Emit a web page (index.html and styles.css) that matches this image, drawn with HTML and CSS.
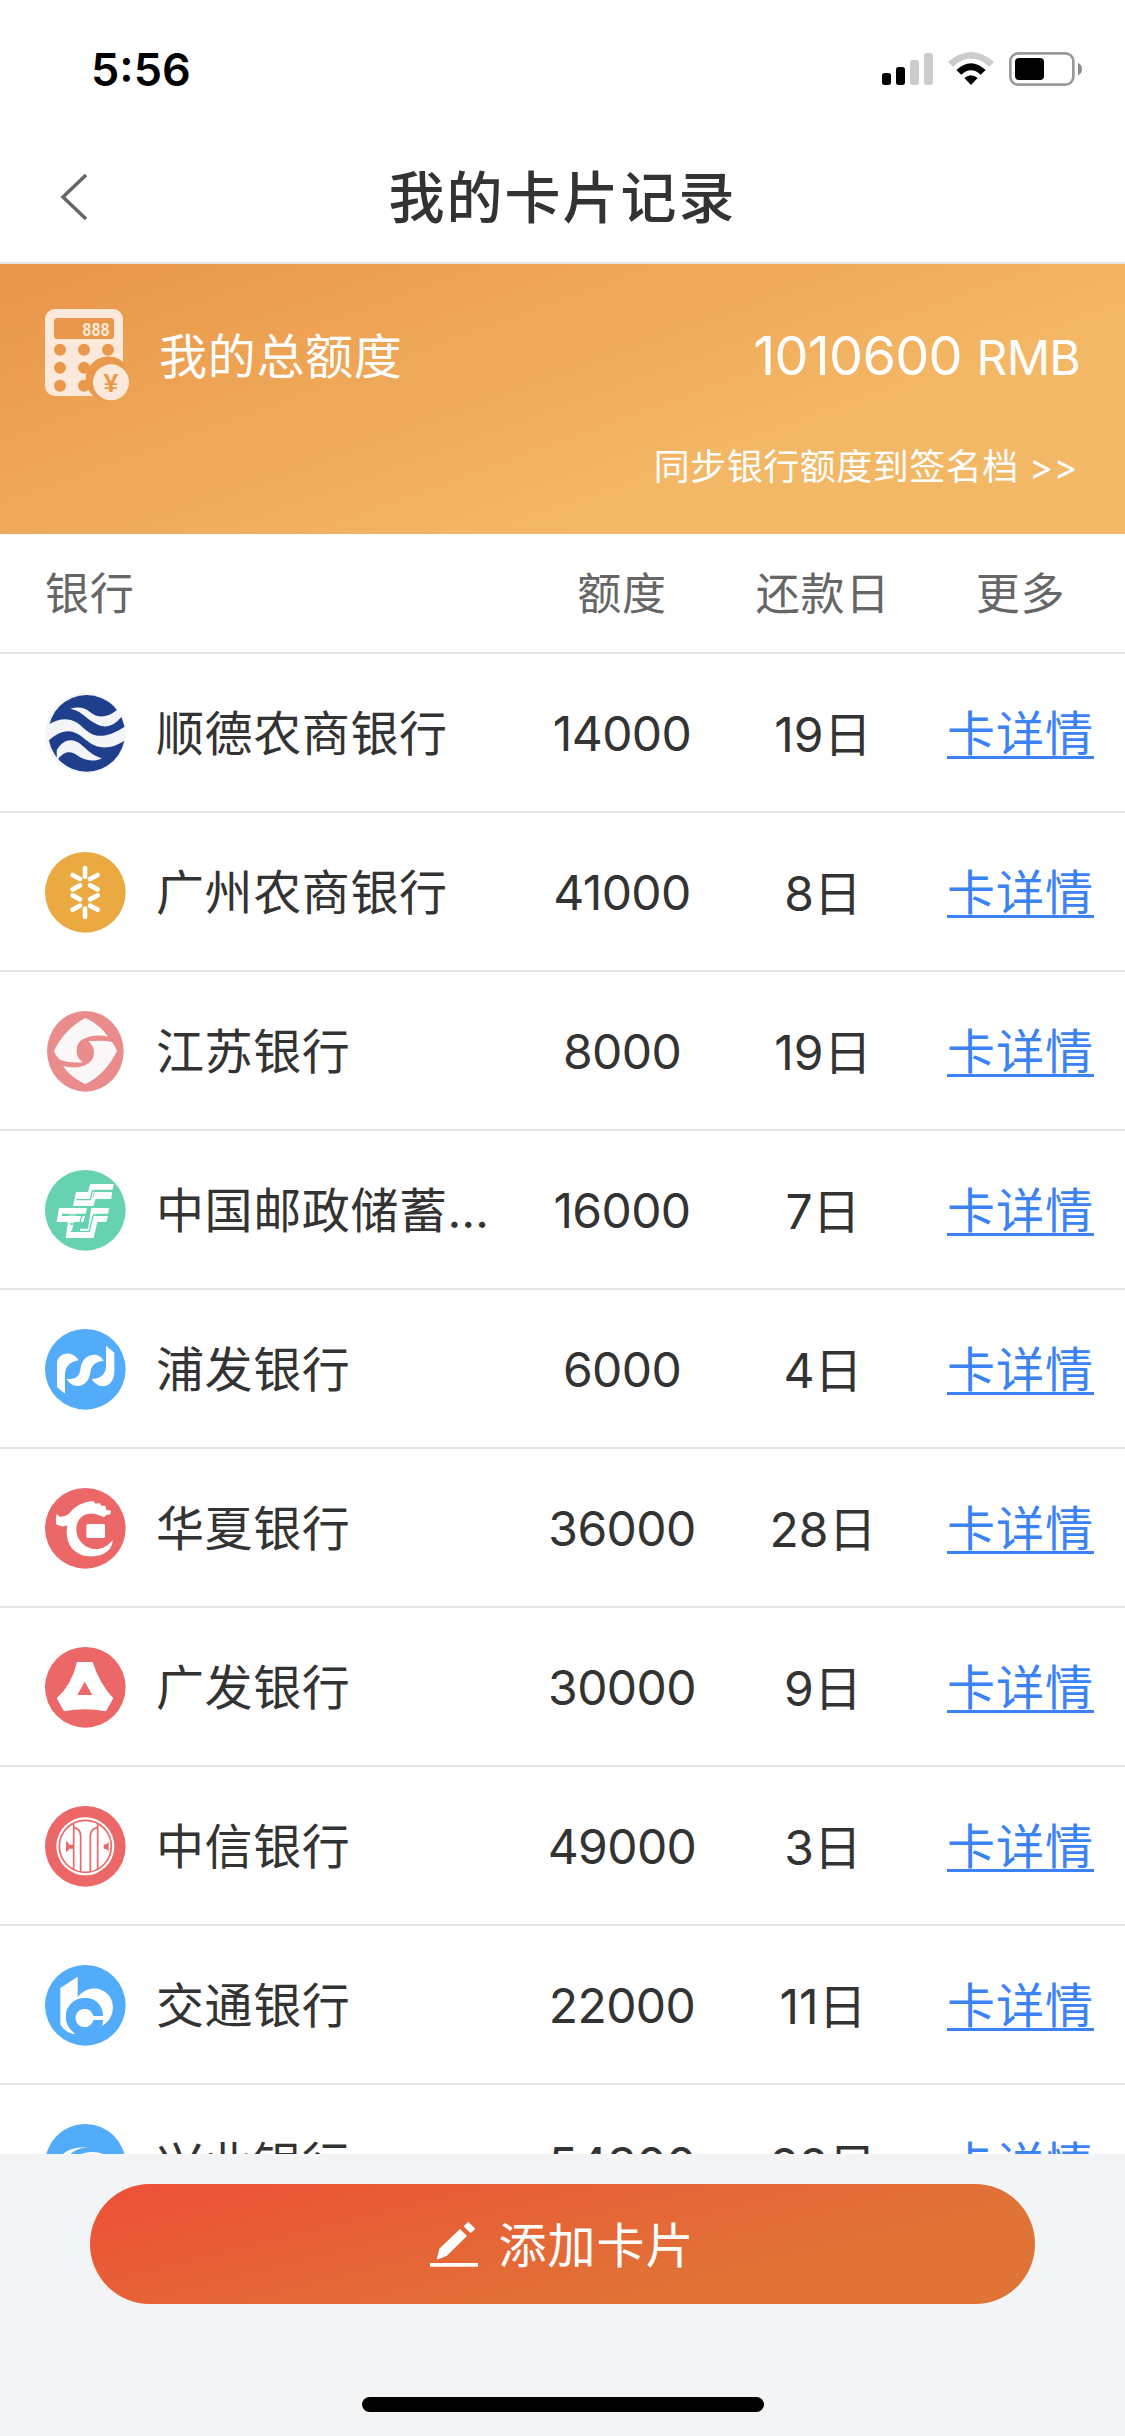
FILE: index.html
```html
<!DOCTYPE html>
<html lang="zh-CN">
<head>
<meta charset="UTF-8">
<meta name="viewport" content="width=device-width, initial-scale=1.0">
<title>我的卡片记录</title>
<link rel="stylesheet" href="styles.css">
</head>
<body>
  <div class="status-bar">
    <span class="time">5:56</span>
    <div class="status-icons">
      <svg width="51" height="34" viewBox="66 66 153 102">
        <rect x="66" y="129" width="27" height="36" rx="8"/>
        <rect x="108" y="111" width="27" height="54" rx="8"/>
        <rect x="150" y="90" width="27" height="75" rx="8" fill="#ccc"/>
        <rect x="192" y="69" width="27" height="96" rx="8" fill="#ccc"/>
      </svg>
      <svg width="46" height="34" viewBox="264 66 138 102">
        <path d="M264 96Q333 36 402 96L388 110Q333 61 279 110Z" fill="#ccc"/>
        <path d="M289 120Q333 79 377 120L362 134Q333 108 304 134Z"/>
        <path d="M313 144Q333 127 353 144L333 165Z"/>
      </svg>
      <svg width="73" height="34" viewBox="447 66 219 102">
        <rect x="451" y="70" width="189" height="94" rx="24" fill="none" stroke="#999" stroke-width="8"/>
        <rect x="465" y="84" width="87" height="66" rx="12"/>
        <path d="M654 98Q666 104 666 117Q666 130 654 136Z" fill="#8c8c8c"/>
      </svg>
    </div>
  </div>

  <div class="nav">
    <svg class="back" width="30" height="48" viewBox="0 0 30 48"><path d="M26 2L3 24L26 46" fill="none" stroke="#666" stroke-width="3.5"/></svg>
    <h1>我的卡片记录</h1>
  </div>

  <div class="banner">
    <div class="total">
      <svg class="calc" width="84" height="92" viewBox="45 57 252 276">
        <rect x="45" y="57" width="234" height="261" rx="30" fill="#fbeadb"/>
        <g fill="#ea994c">
          <rect x="72" y="84" width="180" height="63" rx="10"/>
          <circle cx="90" cy="179" r="18"/>
          <circle cx="162" cy="179" r="18"/>
          <circle cx="234" cy="179" r="18"/>
          <circle cx="90" cy="233" r="18"/>
          <circle cx="162" cy="233" r="18"/>
          <circle cx="90" cy="287" r="18"/>
          <circle cx="162" cy="287" r="18"/>
          <path d="M279 216A67 67 0 1 0 190 318L215 334L297 300Z"/>
        </g>
        <circle cx="243" cy="277" r="54" fill="#fbeadb"/>
        <text class="calc-digits" x="157" y="137" textLength="82" lengthAdjust="spacingAndGlyphs">888</text>
        <text class="calc-yen" x="243" y="305">¥</text>
      </svg>
      <span class="total-label">我的总额度</span>
      <span class="total-value">1010600 <small>RMB</small></span>
    </div>
    <div class="sync">同步银行额度到签名档 &gt;&gt;</div>
  </div>

  <div class="row head">
    <span class="bank">银行</span>
    <span>额度</span>
    <span>还款日</span>
    <span>更多</span>
  </div>

  <div class="list">
    <div class="row">
      <div class="bank">
        <svg class="logo" viewBox="45 39 243 243">
          <circle cx="166" cy="160" r="121" fill="#f3f5f9"/>
          <circle cx="170" cy="160" r="115" fill="#1f3f8c"/>
          <g fill="#f3f5f9">
            <path d="M121 86Q158 75 181 97C205 117 235 113 263 88L276 108C246 148 214 145 185 124C158 105 151 93 121 86Z"/>
            <path d="M50 137C94 109 128 114 153 137C190 175 222 180 288 138L287 179C245 209 207 207 180 189C148 167 119 125 52 185Z"/>
            <path d="M80 211C101 174 130 174 154 194C184 221 195 229 216 234C196 246 170 243 149 231C125 214 107 207 81 241Z"/>
          </g>
        </svg>
        <span class="name">顺德农商银行</span>
      </div>
      <span class="amount">14000</span>
      <span class="day">19日</span>
      <a class="detail">卡详情</a>
    </div>
    <div class="row">
      <div class="bank">
        <svg class="logo" viewBox="45 516 243 243">
          <circle cx="166" cy="637" r="121" fill="#eba942"/>
          <path d="M165 564V590M165 686V711M128 585L150 597M203 585L180 597M128 628L150 616M203 628L180 616M128 646L150 658M203 646L180 658M128 689L150 677M203 689L180 677" stroke="#fff" stroke-width="14" stroke-linecap="round"/>
        </svg>
        <span class="name">广州农商银行</span>
      </div>
      <span class="amount">41000</span>
      <span class="day">8日</span>
      <a class="detail">卡详情</a>
    </div>
    <div class="row">
      <div class="bank">
        <svg class="logo" viewBox="45 33 243 243">
          <ellipse cx="166" cy="154" rx="115" ry="121" fill="#e98c8b"/>
          <path d="M166 54Q213 76 234 110Q194 101 160 117Q139 127 140 154Q141 175 158 187Q119 190 91 180Q75 165 72 153Q103 88 166 54Z" fill="#faf7f9"/>
          <path d="M166 253Q119 230 99 198Q143 209 174 191Q193 180 192 154Q190 136 175 124Q218 119 246 126Q257 141 261 153Q229 220 166 253Z" fill="#faf7f9"/>
        </svg>
        <span class="name">江苏银行</span>
      </div>
      <span class="amount">8000</span>
      <span class="day">19日</span>
      <a class="detail">卡详情</a>
    </div>
    <div class="row">
      <div class="bank">
        <svg class="logo" viewBox="45 510 243 243">
          <circle cx="166" cy="631" r="121" fill="#67d2b2"/>
          <g fill="#fff">
            <path d="M181 552H252L247 569H194L188 593H247L243 596H197L190 618H129L138 576H174Z"/>
            <path d="M194 576H247L243 596H189Z"/>
            <path d="M87 624H171L167 641H96L95 648H165L160 666H80Z"/>
            <path d="M118 636H139L125 695H149L152 689H196L191 714H107Z"/>
            <path d="M184 624H238L234 641H199L195 648H234L229 666H202L195 696H149L151 686H174Z"/>
          </g>
          <path d="M139 599H181L187 573H246M99 645H156L149 672H119M122 694H178L184 667L190 645H234" fill="none" stroke="#67d2b2" stroke-width="4"/>
        </svg>
        <span class="name">中国邮政储蓄银行</span>
      </div>
      <span class="amount">16000</span>
      <span class="day">7日</span>
      <a class="detail">卡详情</a>
    </div>
    <div class="row">
      <div class="bank">
        <svg class="logo" viewBox="45 27 243 243">
          <circle cx="166" cy="148" r="121" fill="#53acf9"/>
          <g fill="#fff">
            <path d="M105 221L81 201V132C81 96 127 88 146 121Q106 128 105 163Z"/>
            <path d="M110 176Q148 184 152 144C155 106 202 88 221 122Q184 125 181 158C174 204 128 210 110 176Z"/>
            <path d="M228 77L253 98V156C251 207 204 210 185 177Q228 174 228 137Z"/>
          </g>
        </svg>
        <span class="name">浦发银行</span>
      </div>
      <span class="amount">6000</span>
      <span class="day">4日</span>
      <a class="detail">卡详情</a>
    </div>
    <div class="row">
      <div class="bank">
        <svg class="logo" viewBox="45 504 243 243">
          <circle cx="166" cy="625" r="121" fill="#ec6868"/>
          <path d="M80 581L89 590Q105 591 116 582Q145 545 191 543L196 551L209 549L215 557L226 557L229 569L243 572L241 583L229 585L222 592L207 586Q185 575 163 585Q138 598 139 631C141 681 206 713 248 660C247 697 211 711 175 709C124 703 103 663 112 616Q98 624 79 613Q76 597 80 581Z" fill="#fff"/>
          <rect x="169" y="612" width="56" height="42" rx="5" fill="#fff"/>
        </svg>
        <span class="name">华夏银行</span>
      </div>
      <span class="amount">36000</span>
      <span class="day">28日</span>
      <a class="detail">卡详情</a>
    </div>
    <div class="row">
      <div class="bank">
        <svg class="logo" viewBox="45 21 243 243">
          <circle cx="166" cy="142" r="121" fill="#ec6868"/>
          <path d="M141 66H188Q209 132 250 175L228 214Q166 201 102 214L80 175Q125 135 141 66Z" fill="#fff"/>
          <path d="M164 125L187 165H142Z" fill="#ec6868"/>
        </svg>
        <span class="name">广发银行</span>
      </div>
      <span class="amount">30000</span>
      <span class="day">9日</span>
      <a class="detail">卡详情</a>
    </div>
    <div class="row">
      <div class="bank">
        <svg class="logo" viewBox="45 498 243 243">
          <circle cx="166" cy="619" r="121" fill="#ec6868"/>
          <circle cx="166" cy="619" r="87" fill="#fff"/>
          <g fill="none" stroke="#ec6868" stroke-width="5">
            <circle cx="166" cy="619" r="78"/>
            <path d="M131 551V690M131 562Q152 567 152 588V696M203 551V690M203 562Q181 567 181 588V696"/>
          </g>
          <path d="M108 604Q112 604 118 614H131V626H118Q112 636 108 636ZM221 614Q233 614 236 604V636Q233 626 221 626Z" fill="#ec6868"/>
        </svg>
        <span class="name">中信银行</span>
      </div>
      <span class="amount">49000</span>
      <span class="day">3日</span>
      <a class="detail">卡详情</a>
    </div>
    <div class="row">
      <div class="bank">
        <svg class="logo" viewBox="45 30 243 243">
          <circle cx="166" cy="151" r="121" fill="#53acf9"/>
          <path d="M91 99L143 65V126C182 78 250 103 249 160Q247 195 216 213L219 195H190A27 27 0 1 1 190 183H219C217 115 128 112 110 168Q100 211 137 237Q105 236 91 208Z" fill="#fff"/>
          <path d="M219 183C217 115 128 112 110 168Q100 211 137 237Q175 240 216 213L219 195H190A27 27 0 1 1 190 183Z" fill="#53acf9"/>
          <path d="M190 183H221V195H190A27 27 0 1 1 190 183Z" fill="#fff"/>
        </svg>
        <span class="name">交通银行</span>
      </div>
      <span class="amount">22000</span>
      <span class="day">11日</span>
      <a class="detail">卡详情</a>
    </div>
    <div class="row">
      <div class="bank">
        <svg class="logo" viewBox="45 507 243 243">
          <circle cx="166" cy="628" r="121" fill="#53acf9"/>
          <path d="M92 604Q117 574 174 577Q134 580 115 604Z" fill="#fff"/>
          <path d="M136 604Q190 578 234 604Z" fill="#fff"/>
        </svg>
        <span class="name">兴业银行</span>
      </div>
      <span class="amount">54300</span>
      <span class="day">22日</span>
      <a class="detail">卡详情</a>
    </div>
  </div>

  <div class="footer">
    <button class="add">
      <svg width="48" height="46" viewBox="30 304 144 138">
        <path d="M50 420L58 387L120 328L141 349L80 409ZM131 320L145 306L166 327L152 341ZM30 430H174V441H30Z" fill="#fff"/>
      </svg>
      <span>添加卡片</span>
    </button>
    <div class="home-bar"></div>
  </div>
</body>
</html>
```

FILE: styles.css
```css
* {
  box-sizing: border-box;
}
body {
  margin: 0;
  width: 1125px;
  height: 2436px;
  overflow: hidden;
  display: flex;
  flex-direction: column;
  font-family: Inter, "Noto Sans CJK SC", sans-serif;
  font-size: 48px;
  color: #333;
  background-color: #fff;
}
svg {
  display: block;
  flex: none;
}
.status-bar {
  height: 132px;
  padding: 6px 43px 0 91px;
  display: flex;
  align-items: center;
  justify-content: space-between;
}
.time {
  font-size: 45px;
  font-weight: 600;
  color: #000;
}
.status-icons {
  display: flex;
  gap: 15px;
}
.nav {
  height: 132px;
  padding: 0 60px;
  display: grid;
  grid-template-columns: 30px 1fr 30px;
  align-items: center;
  border-bottom: 2px solid #e3e3e8;
}
h1 {
  margin: 0;
  padding-bottom: 7px;
  font-size: 56px;
  font-weight: 500;
  letter-spacing: 2px;
  text-align: center;
}
.banner {
  height: 270px;
  padding: 45px 45px 0;
  color: #fff;
  background: linear-gradient(160deg, #ea9549 0%, #f3b866 70%);
}
.total {
  height: 92px;
  display: flex;
  align-items: center;
}
.total-label {
  margin-left: 30px;
  padding-bottom: 5px;
  letter-spacing: 0.7px;
}
.total-value {
  margin-left: auto;
  font-size: 54px;
  letter-spacing: -0.7px;
}
.total-value small {
  font-size: 48px;
}
.calc-digits {
  font: bold 62px "Liberation Mono", monospace;
  fill: #fbeadb;
}
.calc-yen {
  font: bold 80px "Liberation Sans", sans-serif;
  fill: #ea994c;
  text-anchor: middle;
}
.sync {
  margin-top: 40px;
  padding-right: 2px;
  line-height: 52px;
  font-size: 36px;
  letter-spacing: 0.5px;
  text-align: right;
}
.row {
  height: 159px;
  flex: none;
  padding-right: 6px;
  display: grid;
  grid-template-columns: 520px 204px 198px 197px;
  align-items: center;
  text-align: center;
  border-bottom: 2px solid #e5e5e5;
}
.head {
  height: 120px;
  padding-bottom: 4px;
  font-size: 44px;
  letter-spacing: 0.8px;
  color: #666;
}
.bank {
  padding-left: 45px;
  display: flex;
  align-items: center;
  text-align: left;
}
.logo {
  width: 81px;
  height: 81px;
  margin: 2px 30px 0 0;
}
.name {
  width: 350px;
  padding-bottom: 5px;
  letter-spacing: 0.6px;
  white-space: nowrap;
  overflow: hidden;
  text-overflow: ellipsis;
}
.amount {
  padding-top: 2px;
  letter-spacing: -0.6px;
}
.day {
  padding-bottom: 4px;
}
.detail {
  padding-bottom: 5px;
  letter-spacing: 1px;
  color: #3c82f7;
  text-decoration: underline;
  text-decoration-thickness: 3px;
  text-underline-offset: 5px;
  text-decoration-skip-ink: none;
}
.list {
  height: 1500px;
  overflow: hidden;
}
.footer {
  flex: 1;
  padding: 30px 90px 0;
  background-color: #f3f4f6;
}
.add {
  width: 945px;
  height: 120px;
  padding: 0;
  border: none;
  border-radius: 60px;
  display: flex;
  align-items: center;
  justify-content: center;
  gap: 20px;
  font: inherit;
  letter-spacing: 1px;
  color: #fff;
  background: linear-gradient(166deg, #ee4f38 0%, #e07436 72%);
}
.add span {
  padding-bottom: 5px;
}
.home-bar {
  width: 402px;
  height: 15px;
  margin: 93px auto 0;
  border-radius: 8px;
  background-color: #000;
}
```
